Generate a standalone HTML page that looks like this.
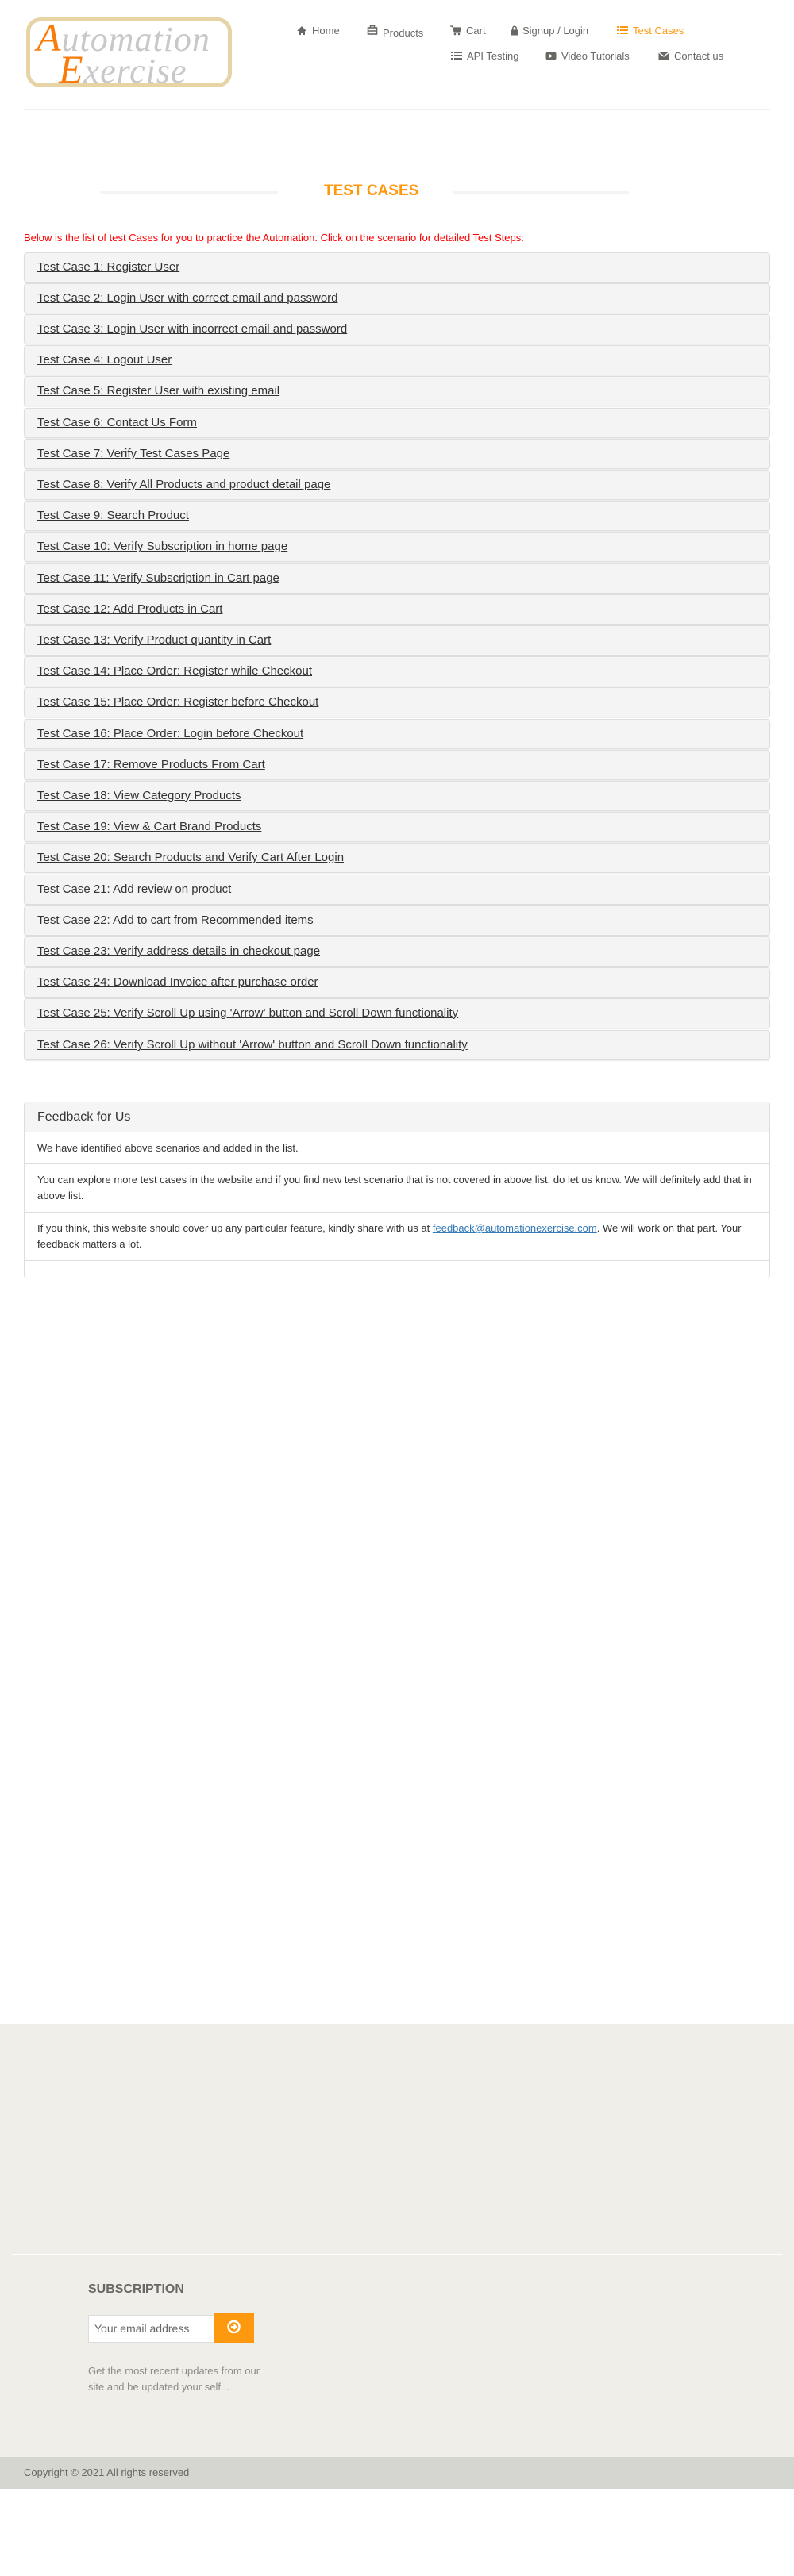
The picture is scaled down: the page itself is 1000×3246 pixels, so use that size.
<!DOCTYPE html>
<html><head><meta charset="utf-8">
<style>
*{box-sizing:border-box;margin:0;padding:0}
body{width:1000px;height:3246px;position:relative;background:#fff;font-family:"Liberation Sans",Arial,sans-serif;color:#696763;overflow:hidden}
.abs{position:absolute}
.logo{left:33px;top:22px;width:259px;height:88px;border:5px solid #e6d3a6;border-radius:18px;background:#fff;overflow:hidden}
.logo .t{position:absolute;font-family:"Liberation Serif",serif;font-style:italic;color:#c8c8c8;font-size:44px;line-height:44px;white-space:nowrap;letter-spacing:1px}
.logo .t b{color:#f97d0c;font-weight:normal;font-size:50px}
.nav{font-size:13px;color:#696763;white-space:nowrap}
.nav svg{position:absolute;left:-20px;top:1px}
.hl{left:30px;top:137px;width:940px;height:1px;background:#f0f0f0}
.title{left:408px;top:230px;font-size:19px;font-weight:bold;color:#fe980f}
.tl{height:3px;background:#f4f4f4;top:241px}
.red{left:30px;top:292px;font-size:13px;color:#f00;white-space:nowrap}
.item{left:30px;width:940px;height:38px;background:#f4f4f4;border:1px solid #ddd;border-radius:4px;box-shadow:0 1px 1px rgba(0,0,0,.08)}
.item a{position:absolute;left:16px;top:9px;font-size:15px;color:#333;text-decoration:underline;white-space:nowrap}
.fb{left:30px;top:1388px;width:940px;height:223px;border:1px solid #ddd;border-radius:4px}
.fbh{position:absolute;left:0;top:0;width:938px;height:38px;background:#f5f5f5;border-bottom:1px solid #ddd;font-size:16px;color:#333;padding:10px 16px}
.row{position:absolute;left:0;width:938px;border-bottom:1px solid #ddd;font-size:13px;color:#333;padding:0 16px;line-height:20px}
.foot{left:0;top:2550px;width:1000px;height:546px;background:#efeee8}
.bot{left:0;top:3096px;width:1000px;height:40px;background:#d6d6d0}
</style></head><body>
<div class="abs logo">
 <div class="t" style="left:8px;top:-2px"><b>A</b>utomation</div>
 <div class="t" style="left:36px;top:38px"><b>E</b>xercise</div>
</div>

<div class="abs nav" style="left:393px;top:31px"><svg width="14" height="13" viewBox="0 0 14 13"><path d="M7 1 L1 7 L3 7 L3 12 L6 12 L6 9 L8 9 L8 12 L11 12 L11 7 L13 7 Z" fill="#696763"/></svg>Home</div>
<div class="abs nav" style="left:482px;top:34px"><svg width="14" height="14" viewBox="0 0 14 14" style="top:-4px"><rect x="1.5" y="5" width="11" height="8" fill="none" stroke="#696763" stroke-width="1.6"/><path d="M4.5 5V2.5h5V5M1.5 9h11" fill="none" stroke="#696763" stroke-width="1.6"/></svg>Products</div>
<div class="abs nav" style="left:587px;top:31px"><svg width="14" height="13" viewBox="0 0 14 13"><path d="M0 1h3l2 7h7l1.5-5H4" fill="#696763" stroke="#696763" stroke-width="1.2"/><circle cx="6" cy="11" r="1.3" fill="#696763"/><circle cx="11" cy="11" r="1.3" fill="#696763"/></svg>Cart</div>
<div class="abs nav" style="left:658px;top:31px"><svg width="10" height="13" viewBox="0 0 10 13" style="left:-15px"><rect x="1" y="5.5" width="8" height="7" fill="#696763"/><path d="M2.8 6V3.5a2.2 2.2 0 0 1 4.4 0V6" fill="none" stroke="#696763" stroke-width="1.5"/></svg>Signup / Login</div>
<div class="abs nav" style="left:797px;top:31px;color:#fe980f"><svg width="14" height="12" viewBox="0 0 14 12"><path d="M0 1h3v2H0zM4 1h10v2H4zM0 5h3v2H0zM4 5h10v2H4zM0 9h3v2H0zM4 9h10v2H4z" fill="#fe980f"/></svg>Test Cases</div>
<div class="abs nav" style="left:588px;top:63px"><svg width="14" height="12" viewBox="0 0 14 12"><path d="M0 1h3v2H0zM4 1h10v2H4zM0 5h3v2H0zM4 5h10v2H4zM0 9h3v2H0zM4 9h10v2H4z" fill="#696763"/></svg>API Testing</div>
<div class="abs nav" style="left:707px;top:63px"><svg width="14" height="13" viewBox="0 0 14 13"><rect x="0.5" y="1" width="13" height="11" rx="3" fill="#696763"/><path d="M5 4l4 2.5L5 9z" fill="#fff"/></svg>Video Tutorials</div>
<div class="abs nav" style="left:849px;top:63px"><svg width="14" height="13" viewBox="0 0 14 13"><rect x="0.5" y="1" width="13" height="11" fill="#696763"/><path d="M0.5 2l6.5 5 6.5-5" fill="none" stroke="#fff" stroke-width="1.4"/></svg>Contact us</div>

<div class="abs hl"></div>
<div class="abs tl" style="left:126px;width:224px"></div>
<div class="abs tl" style="left:570px;width:222px"></div>
<div class="abs title">TEST CASES</div>
<div class="abs red">Below is the list of test Cases for you to practice the Automation. Click on the scenario for detailed Test Steps:</div>

<div class="abs item" style="top:318px"><a>Test Case 1: Register User</a></div>
<div class="abs item" style="top:357px"><a>Test Case 2: Login User with correct email and password</a></div>
<div class="abs item" style="top:396px"><a>Test Case 3: Login User with incorrect email and password</a></div>
<div class="abs item" style="top:435px"><a>Test Case 4: Logout User</a></div>
<div class="abs item" style="top:474px"><a>Test Case 5: Register User with existing email</a></div>
<div class="abs item" style="top:514px"><a>Test Case 6: Contact Us Form</a></div>
<div class="abs item" style="top:553px"><a>Test Case 7: Verify Test Cases Page</a></div>
<div class="abs item" style="top:592px"><a>Test Case 8: Verify All Products and product detail page</a></div>
<div class="abs item" style="top:631px"><a>Test Case 9: Search Product</a></div>
<div class="abs item" style="top:670px"><a>Test Case 10: Verify Subscription in home page</a></div>
<div class="abs item" style="top:710px"><a>Test Case 11: Verify Subscription in Cart page</a></div>
<div class="abs item" style="top:749px"><a>Test Case 12: Add Products in Cart</a></div>
<div class="abs item" style="top:788px"><a>Test Case 13: Verify Product quantity in Cart</a></div>
<div class="abs item" style="top:827px"><a>Test Case 14: Place Order: Register while Checkout</a></div>
<div class="abs item" style="top:866px"><a>Test Case 15: Place Order: Register before Checkout</a></div>
<div class="abs item" style="top:906px"><a>Test Case 16: Place Order: Login before Checkout</a></div>
<div class="abs item" style="top:945px"><a>Test Case 17: Remove Products From Cart</a></div>
<div class="abs item" style="top:984px"><a>Test Case 18: View Category Products</a></div>
<div class="abs item" style="top:1023px"><a>Test Case 19: View &amp; Cart Brand Products</a></div>
<div class="abs item" style="top:1062px"><a>Test Case 20: Search Products and Verify Cart After Login</a></div>
<div class="abs item" style="top:1102px"><a>Test Case 21: Add review on product</a></div>
<div class="abs item" style="top:1141px"><a>Test Case 22: Add to cart from Recommended items</a></div>
<div class="abs item" style="top:1180px"><a>Test Case 23: Verify address details in checkout page</a></div>
<div class="abs item" style="top:1219px"><a>Test Case 24: Download Invoice after purchase order</a></div>
<div class="abs item" style="top:1258px"><a>Test Case 25: Verify Scroll Up using 'Arrow' button and Scroll Down functionality</a></div>
<div class="abs item" style="top:1298px"><a>Test Case 26: Verify Scroll Up without 'Arrow' button and Scroll Down functionality</a></div>

<div class="abs fb">
 <div class="fbh">Feedback for Us</div>
 <div class="row" style="top:38px;height:40px;padding-top:10px">We have identified above scenarios and added in the list.</div>
 <div class="row" style="top:78px;height:61px;padding-top:10px">You can explore more test cases in the website and if you find new test scenario that is not covered in above list, do let us know. We will definitely add that in above list.</div>
 <div class="row" style="top:139px;height:61px;padding-top:10px">If you think, this website should cover up any particular feature, kindly share with us at <span style="color:#337ab7;text-decoration:underline">feedback@automationexercise.com</span>. We will work on that part. Your feedback matters a lot.</div>
</div>

<div class="abs foot"></div>
<div class="abs" style="left:15px;top:2840px;width:970px;height:1px;background:#fff"></div>
<div class="abs" style="left:111px;top:2876px;font-size:16px;color:#696763;font-weight:bold">SUBSCRIPTION</div>
<div class="abs" style="left:111px;top:2917px;width:159px;height:35px;background:#fff;border:1px solid #ddd;font-size:14px;color:#696763;padding:8px 7px">Your email address</div>
<div class="abs" style="left:269px;top:2915px;width:51px;height:37px;background:#fe980f"><svg width="51" height="37" viewBox="0 0 51 37"><circle cx="25.5" cy="17" r="7" fill="none" stroke="#fff" stroke-width="2.5"/><path d="M22 17h6M25.5 14l3 3-3 3" fill="none" stroke="#fff" stroke-width="2"/></svg></div>
<div class="abs" style="left:111px;top:2978px;width:220px;font-size:13px;line-height:20px;color:#8c8c88">Get the most recent updates from our site and be updated your self...</div>
<div class="abs bot"></div>
<div class="abs" style="left:30px;top:3108px;font-size:13px;color:#696763">Copyright © 2021 All rights reserved</div>
</body></html>
